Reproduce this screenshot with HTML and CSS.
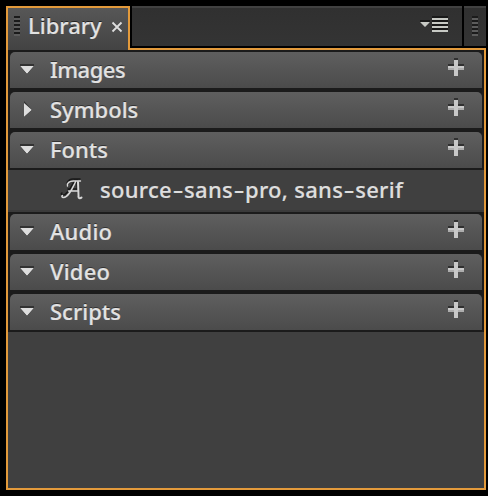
FILE: index.html
```html
<!DOCTYPE html>
<html lang="en">
<head>
<meta charset="utf-8">
<title>Library</title>
<link rel="stylesheet" href="styles.css">
</head>
<body>
<div class="window">
  <header class="tabs">
    <div class="tab"><i class="grip"></i><span class="tab-name">Library</span>
      <svg class="close" width="12" height="12" viewBox="0 0 12 12"><path d="M1.5 1.5l9 9M10.5 1.5l-9 9"/></svg>
    </div>
    <div class="bar">
      <svg width="28" height="18" viewBox="0 0 28 18"><path fill="#191919" d="M0 4h10v3H0zM12 0h16v2H12zM12 4h16v2H12zM12 8h16v2H12zM12 12h16v2H12z"/><path fill="#c7c9c4" d="M0 6h10L5 11zM12 2h16v2H12zM12 6h16v2H12zM12 10h16v2H12zM12 14h16v2H12z"/></svg>
    </div>
    <div class="next"><i class="grip"></i></div>
  </header>
  <main class="panel">
    <section class="row"><i class="arrow"></i><span class="name images">Images</span><i class="plus"></i></section>
    <section class="row"><i class="arrow closed"></i><span class="name symbols">Symbols</span><i class="plus"></i></section>
    <section class="row"><i class="arrow"></i><span class="name fonts">Fonts</span><i class="plus"></i></section>
    <div class="item">
      <svg width="24" height="26" viewBox="0 0 24 26"><g fill="none" stroke="#191919" stroke-linecap="round" stroke-linejoin="round"><path stroke-width="1.5" d="M7 6c1-2 3-4 6-4h7M15 3C12 8 8 18 3 18c-2 0-2-2-1-2M8 12h10"/><path stroke-width="2" d="M17 3l1 15"/></g><g transform="translate(.5 2)" fill="none" stroke="#d8d8d8" stroke-linecap="round" stroke-linejoin="round"><path stroke-width="1.4" d="M7 7c-1-3 2-5 6-5h7M15 3C12 9 8 18.500 3 18.500c-2 0-2-2-1-2M8 12h10"/><path stroke-width="2" d="M17.500 3l.5 15c0 1.500 2 1.500 3 .5"/></g></svg>
      <span class="font-name">source<b>-</b>sans<b>-</b>pro, sans<b>-</b>serif</span>
    </div>
    <section class="row"><i class="arrow"></i><span class="name audio">Audio</span><i class="plus"></i></section>
    <section class="row"><i class="arrow"></i><span class="name video">Video</span><i class="plus"></i></section>
    <section class="row"><i class="arrow"></i><span class="name scripts">Scripts</span><i class="plus"></i></section>
  </main>
</div>
</body>
</html>
```
FILE: styles.css
```css
* { box-sizing: border-box; }
body { margin: 0; background: #000; }
.window {
  width: 488px; height: 496px; padding: 6px 2px 6px 6px;
  display: flex; flex-direction: column;
  font: 500 22px/30px "Noto Sans", sans-serif; color: #e2e2e2;
  -webkit-text-stroke: 0.2px currentColor;
}
.tabs { display: flex; height: 42px; flex: none; }
.tab {
  position: relative; z-index: 1; width: 124px; height: 44px; flex: none;
  border: 2px solid #e39a3b; border-bottom: 0;
  background: linear-gradient(#575757, #434343);
  display: flex; align-items: flex-start; padding: 2px 0 0 6px;
}
.tab::after { content: ""; position: absolute; right: -2px; bottom: 0; width: 2px; height: 2px; background: #e39a3b; }
.grip {
  width: 6px; height: 20px; flex: none; margin-top: 6px;
  background: repeating-linear-gradient(#1b1b1b 0 2px, #5c5c5c 2px 4px);
}
.tab-name { width: 75px; margin-left: 8px; flex: none; text-shadow: 0 -1px #222; white-space: nowrap; }
.close { margin: 11px 0 0 8px; flex: none; }
.close path { fill: none; stroke: #dedede; stroke-width: 1.8; }
.bar, .next { height: 40px; background: linear-gradient(#303030, #343434); border-top: 2px solid #414141; }
.bar { width: 330px; margin-left: 2px; padding: 8px 14px 0 0; display: flex; justify-content: flex-end; }
.next { width: 22px; margin-left: 2px; padding: 8px 0 0 8px; }
.next .grip { display: block; margin: 0; }
.panel { flex: 1; border: 2px solid #e39a3b; background: #404040; }
.row {
  height: 40px; border: 2px solid #1b1b1b;
  background: #1b1b1b; display: flex; align-items: flex-start;
  padding: 2px 18px 0 10px; position: relative; z-index: 0;
}
.row::before {
  content: ""; position: absolute; z-index: -1; inset: 0;
  border-radius: 5px 5px 0 0; background: linear-gradient(#5f5f5f, #4b4b4b);
}
.arrow { width: 14px; height: 10px; margin-top: 10px; flex: none; background: #323232; clip-path: polygon(0 0, 100% 0, 100% 20%, 50% 100%, 0 20%); position: relative; }
.arrow::after { content: ""; position: absolute; inset: 2px 0 0; background: #dedede; clip-path: polygon(0 0, 100% 0, 50% 100%); }
.closed { width: 8px; height: 16px; margin: 7px 2px 0 4px; clip-path: polygon(0 0, 100% 55%, 0 100%); }
.closed::after { clip-path: polygon(0 0, 100% 50%, 0 100%); }
.name { margin-left: 16px; flex: 1; text-shadow: 0 -1px #333; }
.images { letter-spacing: -0.5px; }
.audio, .video { letter-spacing: 0.2px; }
.plus { width: 16px; height: 18px; margin-top: 4px; flex: none;
  background: linear-gradient(#303030 0 2px, #c8c8c8 2px) 6px 0 / 4px 18px no-repeat,
    linear-gradient(#303030 0 2px, #c9c9c9 2px 4px, #adadad 4px) 0 6px / 16px 6px no-repeat;
}
.item { height: 42px; background: linear-gradient(#404040 0 40px, #3a3a3a 40px); display: flex; align-items: flex-start; padding: 4px 0 0 52px; }
.item svg { flex: none; margin-top: 3px; }
.font-name { margin-left: 16px; white-space: nowrap; color: #dedede; letter-spacing: 0.3px; }
.font-name b { display: inline-block; width: 12px; font-weight: inherit; letter-spacing: 0; transform: scaleX(1.5); text-align: center; }
```
